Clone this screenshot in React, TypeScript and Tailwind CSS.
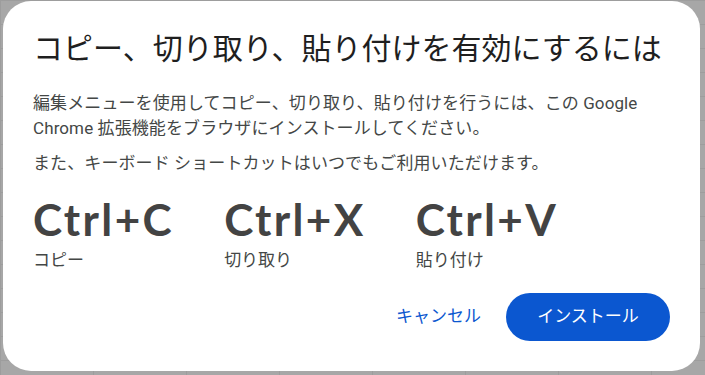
import React from "react";

const shortcuts = [
  { keys: "Ctrl+C", label: "コピー" },
  { keys: "Ctrl+X", label: "切り取り" },
  { keys: "Ctrl+V", label: "貼り付け" },
];

export default function App() {
  return (
    <div
      className="w-[705px] h-[375px] overflow-hidden bg-[#a7a7a7] bg-[linear-gradient(to_right,#9d9d9d_1px,transparent_1px),linear-gradient(to_bottom,#9d9d9d_1px,transparent_1px)] bg-[size:93px_24px] pl-[3px] pt-[1px]"
      style={{ fontFamily: '"Roboto", "Noto Sans CJK JP", sans-serif' }}
    >
      <div className="w-[697px] h-[370px] rounded-[28px] bg-white px-[30px] pt-[30px] pb-[30px] flex flex-col">
        <h1 className="text-[30px] leading-[36px] text-[#1f1f1f] font-normal">
          コピー、切り取り、貼り付けを有効にするには
        </h1>
        <p className="mt-[24px] text-[17px] leading-[25px] tracking-[0.1px] text-[#444746]">
          編集メニューを使用してコピー、切り取り、貼り付けを行うには、この Google Chrome 拡張機能をブラウザにインストールしてください。
        </p>
        <p className="mt-[10px] text-[17px] leading-[25px] tracking-[0.1px] text-[#444746]">
          また、キーボード ショートカットはいつでもご利用いただけます。
        </p>
        <div className="mt-[21px] flex gap-[50px]">
          {shortcuts.map((s) => (
            <div key={s.keys} className="flex flex-col">
              <div
                className="text-[44px] leading-[44px] font-bold tracking-[2.4px] text-[#434343]"
                style={{ fontFamily: '"Lato", sans-serif' }}
              >
                {s.keys}
              </div>
              <div className="mt-[7px] text-[17px] leading-[24px] text-[#444746]">
                {s.label}
              </div>
            </div>
          ))}
        </div>
        <div className="mt-auto flex items-center justify-end gap-[25px]">
          <button className="text-[17px] text-[#0b57d0] px-0">キャンセル</button>
          <button className="h-[48px] w-[164px] rounded-full bg-[#0b57d0] text-white text-[17px]">
            インストール
          </button>
        </div>
      </div>
    </div>
  );
}
